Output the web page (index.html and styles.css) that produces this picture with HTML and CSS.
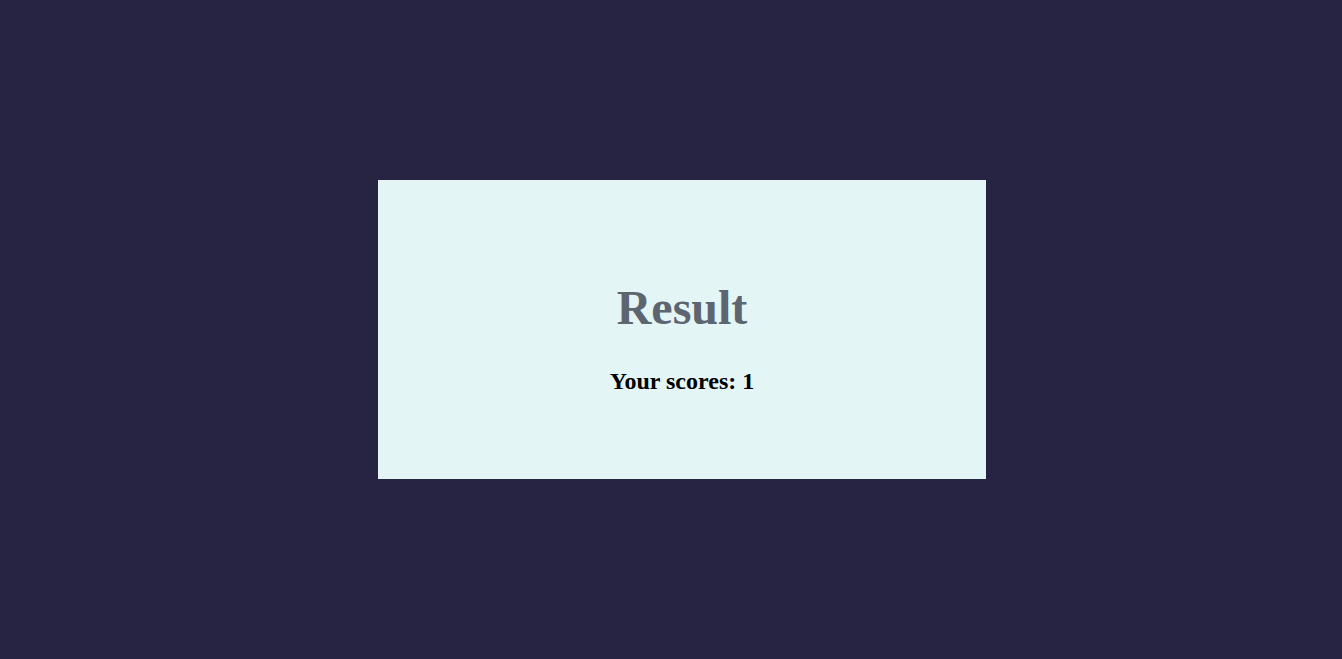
FILE: index.html
```html
<!DOCTYPE html>
<html lang="en">
<head>
<meta charset="utf-8">
<title>Result</title>
<link rel="stylesheet" href="styles.css">
</head>
<body>
<main class="page">
  <section class="card">
    <h1 class="title">Result</h1>
    <h2 class="score">Your scores: 1</h2>
  </section>
</main>
</body>
</html>
```

FILE: styles.css
```css
html, body {
  margin: 0;
  padding: 0;
  height: 100%;
}
body {
  background: #272443;
  font-family: "Liberation Serif", "Times New Roman", serif;
}
.page {
  height: 100%;
  display: flex;
  align-items: center;
  justify-content: center;
  padding-left: 22px;
  box-sizing: border-box;
}
.card {
  width: 608px;
  height: 299px;
  background: #e3f5f5;
  box-sizing: border-box;
  padding-top: 100px;
  text-align: center;
}
.title {
  margin: 0;
  font-size: 48px;
  line-height: 55px;
  font-weight: bold;
  color: #5d6570;
}
.score {
  margin: 32px 0 0;
  font-size: 24px;
  line-height: 28px;
  font-weight: bold;
  color: #000;
}
```
